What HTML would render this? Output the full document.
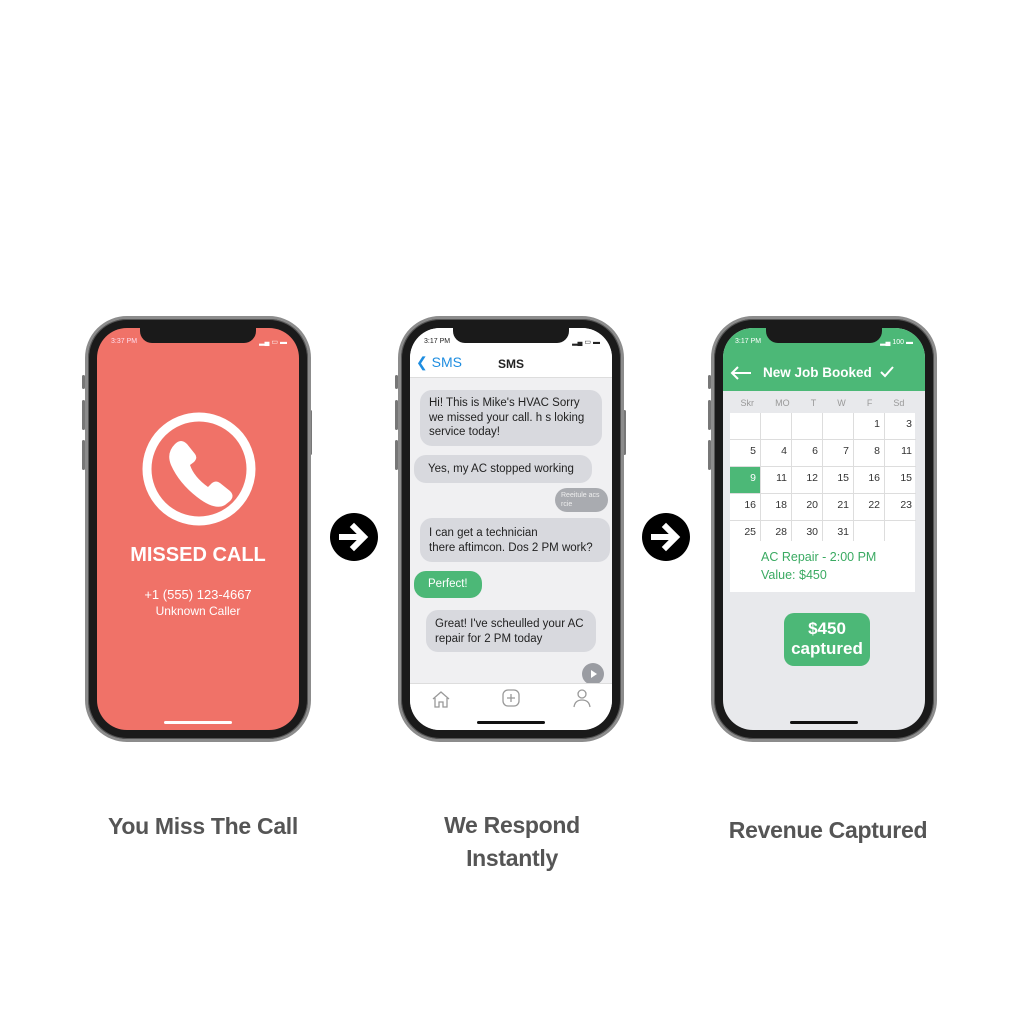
<!DOCTYPE html>
<html><head><meta charset="utf-8"><style>
*{margin:0;padding:0;box-sizing:border-box}
body{width:1024px;height:1024px;background:#fff;position:relative;overflow:hidden;font-family:"Liberation Sans",sans-serif}
.a{position:absolute}
.phone{position:absolute;width:226px;height:426px;border-radius:42px;background:#1a1a1a;border:3px solid #8c8c8c;box-shadow:0 0 0 1px #555 inset}
.scr{position:absolute;left:9px;top:9px;right:9px;bottom:9px;border-radius:30px;overflow:hidden}
.notch{position:absolute;left:50%;margin-left:-58px;top:0;width:116px;height:15px;background:#1a1a1a;border-radius:0 0 12px 12px}
.btn{position:absolute;background:#777;width:3px;border-radius:2px}
.st{position:absolute;top:10px;font-size:7px}
.hb{position:absolute;bottom:6px;left:50%;margin-left:-34px;width:68px;height:3px;border-radius:2px}
.bub{position:absolute;background:#d8d9de;border-radius:12px;font-size:11.5px;color:#222;padding:0 9px;line-height:14.5px}
.lbl{position:absolute;font-weight:bold;color:#555;font-size:23px;text-align:center;letter-spacing:-0.3px}
.arr{position:absolute;width:48px;height:48px;border-radius:50%;background:#000}
.cal{position:absolute;left:7px;top:85px;width:185px;background:#fff}
.cell{position:absolute;width:31px;height:27px;border-right:1px solid #ddd;border-bottom:1px solid #ddd;font-size:10.5px;text-align:right;padding:5px 4px 0 0;color:#333}
</style></head><body>

<!-- Phone 1 -->
<div class="btn" style="left:82px;top:375px;height:14px"></div>
<div class="btn" style="left:82px;top:400px;height:30px"></div>
<div class="btn" style="left:82px;top:440px;height:30px"></div>
<div class="btn" style="left:309px;top:410px;height:45px"></div>
<div class="phone" style="left:85px;top:316px">
 <div class="scr" style="background:#f07268">
  <div class="notch"></div>
  <div class="st" style="left:14px;color:#fde">3:37 PM</div>
  <div class="st" style="right:12px;color:#fff">▂▄ ▭ ▬</div>
  <svg class="a" style="left:44px;top:83px" width="116" height="116" viewBox="0 0 116 116"><circle cx="58" cy="58" r="52" fill="none" stroke="#fff" stroke-width="9"/><path d="M34 33 q6-6 12 0 l8 10 q3 4 -1 8 l-4 3 q4 12 18 22 l4-4 q4-3 8 0 l10 8 q5 5 0 10 l-5 4 q-10 6 -28-8 q-18-14 -26-32 q-5-12 4-21z" fill="#fff"/></svg>
  <div class="a" style="left:0;right:0;top:216px;text-align:center;color:#fff;font-weight:bold;font-size:20px">MISSED CALL</div>
  <div class="a" style="left:0;right:0;top:259px;text-align:center;color:#fff;font-size:13px">+1 (555) 123-4667</div>
  <div class="a" style="left:0;right:0;top:276px;text-align:center;color:#fff;font-size:12px">Unknown Caller</div>
  <div class="hb" style="background:#fff"></div>
 </div>
</div>

<div class="arr" style="left:330px;top:513px"><svg width="48" height="48" viewBox="0 0 48 48"><path d="M12 24h20M24 14l10 10-10 10" stroke="#fff" stroke-width="6" fill="none" stroke-linecap="square"/></svg></div>

<!-- Phone 2 -->
<div class="btn" style="left:395px;top:375px;height:14px"></div>
<div class="btn" style="left:395px;top:400px;height:30px"></div>
<div class="btn" style="left:395px;top:440px;height:30px"></div>
<div class="btn" style="left:623px;top:410px;height:45px"></div>
<div class="phone" style="left:398px;top:316px">
 <div class="scr" style="background:#f0f0f2">
  <div class="a" style="left:0;top:0;right:0;height:50px;background:#fff;border-bottom:1px solid #ddd"></div>
  <div class="notch"></div>
  <div class="st" style="left:14px;color:#222">3:17 PM</div>
  <div class="st" style="right:12px;color:#222">▂▄ ▭ ▬</div>
  <div class="a" style="left:6px;top:26px;color:#1e8de0;font-size:14px">&#10094; SMS</div>
  <div class="a" style="left:0;right:0;top:29px;text-align:center;font-size:12px;font-weight:bold;color:#222">SMS</div>
  <div class="bub" style="left:10px;top:62px;width:182px;height:56px;padding-top:6px;white-space:nowrap">Hi! This is Mike's HVAC Sorry<br>we missed your call. h s loking<br>service today!</div>
  <div class="bub" style="left:4px;top:127px;width:178px;height:28px;padding-top:7px;padding-left:14px">Yes, my AC stopped working</div>
  <div class="bub" style="left:145px;top:160px;width:53px;height:24px;background:#a9abb0;color:#eee;font-size:7px;line-height:9px;padding:3px 6px">Reeitule acs rcie</div>
  <div class="bub" style="left:10px;top:190px;width:190px;height:44px;padding-top:8px;white-space:nowrap">I can get a technician<br>there aftimcon. Dos 2 PM work?</div>
  <div class="bub" style="left:4px;top:243px;width:68px;height:27px;background:#4cb877;color:#fff;padding-top:6px;padding-left:14px">Perfect!</div>
  <div class="bub" style="left:16px;top:282px;width:170px;height:42px;padding-top:7px">Great! I've scheulled your AC repair for 2 PM today</div>
  <div class="a" style="left:172px;top:335px;width:22px;height:22px;border-radius:50%;background:#9a9ca2"><svg width="22" height="22"><path d="M9 7l6 4-6 4z" fill="#fff"/></svg></div>
  <div class="a" style="left:0;right:0;top:355px;bottom:0;background:#fff;border-top:1px solid #ddd"></div>
  <svg class="a" style="left:20px;top:361px" width="22" height="20"><path d="M3 10L11 3l8 7M5 9v9h4v-5h4v5h4V9" fill="none" stroke="#999" stroke-width="1.3"/></svg>
  <svg class="a" style="left:91px;top:360px" width="20" height="20"><rect x="2" y="2" width="16" height="16" rx="5" fill="none" stroke="#999" stroke-width="1.3"/><path d="M10 6v8M6 10h8" stroke="#999" stroke-width="1.3"/></svg>
  <svg class="a" style="left:162px;top:360px" width="20" height="20"><circle cx="10" cy="6" r="4" fill="none" stroke="#999" stroke-width="1.3"/><path d="M2 19q1-7 8-7t8 7" fill="none" stroke="#999" stroke-width="1.3"/></svg>
  <div class="hb" style="background:#111"></div>
 </div>
</div>

<div class="arr" style="left:642px;top:513px"><svg width="48" height="48" viewBox="0 0 48 48"><path d="M12 24h20M24 14l10 10-10 10" stroke="#fff" stroke-width="6" fill="none" stroke-linecap="square"/></svg></div>

<!-- Phone 3 -->
<div class="btn" style="left:708px;top:375px;height:14px"></div>
<div class="btn" style="left:708px;top:400px;height:30px"></div>
<div class="btn" style="left:708px;top:440px;height:30px"></div>
<div class="btn" style="left:934px;top:410px;height:45px"></div>
<div class="phone" style="left:711px;top:316px">
 <div class="scr" style="background:#e8e9ec">
  <div class="a" style="left:0;top:0;right:0;height:63px;background:#4cb877"></div>
  <div class="notch"></div>
  <div class="st" style="left:12px;color:#fff">3:17 PM</div>
  <div class="st" style="right:12px;color:#fff">▂▄ 100 ▬</div>
  <svg class="a" style="left:6px;top:37px" width="24" height="16"><path d="M22 8H3M9 2L3 8l6 6" stroke="#fff" stroke-width="2" fill="none"/></svg>
  <div class="a" style="left:40px;top:37px;color:#fff;font-weight:bold;font-size:13.5px">New Job Booked</div>
  <svg class="a" style="left:156px;top:37px" width="16" height="14"><path d="M2 7l4 4 8-9" stroke="#fff" stroke-width="2" fill="none"/></svg>
  <div class="a" style="left:7px;top:70px;width:185px;font-size:9px;color:#999;display:flex;justify-content:space-around"><span>Skr</span><span>MO</span><span>T</span><span>W</span><span>F</span><span>Sd</span></div>
  <div class="cal" style="height:179px">
   <div class="cell" style="left:0;top:0"></div><div class="cell" style="left:31px;top:0"></div><div class="cell" style="left:62px;top:0"></div><div class="cell" style="left:93px;top:0"></div><div class="cell" style="left:124px;top:0">1</div><div class="cell" style="left:155px;top:0;border-right:0">3</div>
   <div class="cell" style="left:0;top:27px">5</div><div class="cell" style="left:31px;top:27px">4</div><div class="cell" style="left:62px;top:27px">6</div><div class="cell" style="left:93px;top:27px">7</div><div class="cell" style="left:124px;top:27px">8</div><div class="cell" style="left:155px;top:27px;border-right:0">11</div>
   <div class="cell" style="left:0;top:54px;background:#4cb877;color:#fff">9</div><div class="cell" style="left:31px;top:54px">11</div><div class="cell" style="left:62px;top:54px">12</div><div class="cell" style="left:93px;top:54px">15</div><div class="cell" style="left:124px;top:54px">16</div><div class="cell" style="left:155px;top:54px;border-right:0">15</div>
   <div class="cell" style="left:0;top:81px">16</div><div class="cell" style="left:31px;top:81px">18</div><div class="cell" style="left:62px;top:81px">20</div><div class="cell" style="left:93px;top:81px">21</div><div class="cell" style="left:124px;top:81px">22</div><div class="cell" style="left:155px;top:81px;border-right:0">23</div>
   <div class="cell" style="left:0;top:108px;border-bottom:0;height:20px">25</div><div class="cell" style="left:31px;top:108px;border-bottom:0;height:20px">28</div><div class="cell" style="left:62px;top:108px;border-bottom:0;height:20px">30</div><div class="cell" style="left:93px;top:108px;border-bottom:0;height:20px">31</div><div class="cell" style="left:124px;top:108px;border-bottom:0;height:20px"></div>
   <div class="a" style="left:31px;top:135px;color:#3aaa62;font-size:12.5px;line-height:18px">AC Repair - 2:00 PM<br>Value: $450</div>
  </div>
  <div class="a" style="left:61px;top:285px;width:86px;height:53px;border-radius:10px;background:#4cb877;color:#fff;font-weight:bold;text-align:center;font-size:17px;line-height:20px;padding-top:6px">$450<br>captured</div>
  <div class="hb" style="background:#111"></div>
 </div>
</div>

<div class="lbl" style="left:60px;width:286px;top:813px">You Miss The Call</div>
<div class="lbl" style="left:380px;width:264px;top:809px;line-height:33px">We Respond<br>Instantly</div>
<div class="lbl" style="left:680px;width:296px;top:817px">Revenue Captured</div>
</body></html>
